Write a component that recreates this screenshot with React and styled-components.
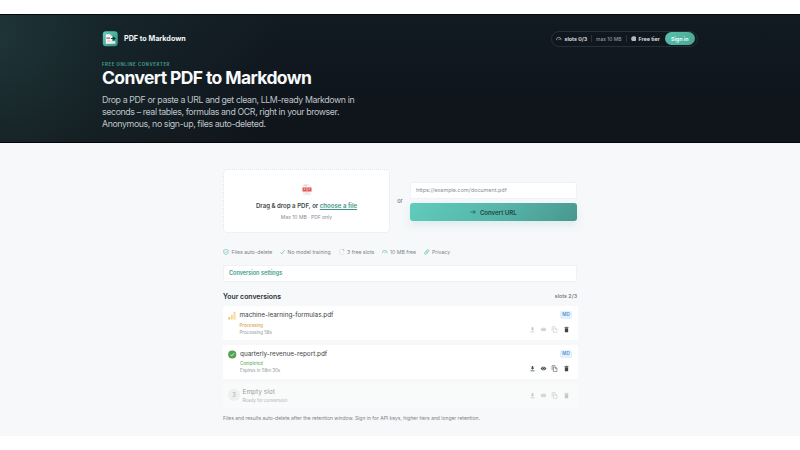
import React from 'react';
import styled, { createGlobalStyle } from 'styled-components';

const GlobalStyle = createGlobalStyle`
  * { box-sizing: border-box; }
  body { margin: 0; background: #fff; font-family: Inter, 'Liberation Sans', sans-serif; }
  h1, h2, p { margin: 0; }
  svg { display: block; flex: none; }
`;

const Page = styled.div`
  height: 450px;
  padding-top: 14px;
  overflow: hidden;
`;
const Hero = styled.header`
  height: 129px;
  padding: 15px 102px 0;
  border-top: 1px solid #04080b;
  border-bottom: 1px solid #04070a;
  background:
    radial-gradient(ellipse 280px 320px at 0 20%, rgba(47, 87, 83, 0.44), rgba(35, 67, 65, 0.26) 40%, transparent),
    linear-gradient(180deg, #121b22 0%, #10161d 55%, #10141b 100%);
`;
const NavBar = styled.nav`
  display: flex;
  align-items: center;
  justify-content: space-between;
  height: 17px;
`;
const Brand = styled.div`
  display: flex;
  align-items: center;
  gap: 6px;
  color: #f4f7f8;
  font-size: 7.2px;
  font-weight: 700;
  white-space: nowrap;
`;
const AccountPill = styled.div`
  display: flex;
  align-items: center;
  width: 147px;
  height: 16px;
  padding: 0 2px 0 4px;
  border: 1px solid #25303a;
  border-radius: 8px;
  background: #10171e;
  white-space: nowrap;
`;
const PillIcon = styled.span`
  width: 6px;
  color: #c8cdd0;
`;
const PillText = styled.span`
  width: ${p => p.$w}px;
  margin-left: ${p => p.$gap || 0}px;
  color: ${p => (p.$muted ? '#9299a0' : '#e3e7e9')};
  font-size: ${p => (p.$muted ? 4.95 : 5.35)}px;
  font-weight: ${p => (p.$muted ? 500 : 600)};
`;
const PillDivider = styled.i`
  width: 1px;
  height: 7px;
  margin: 0 4px 0 3.5px;
  background: #2a333b;
`;
const SignIn = styled.button`
  width: 30.5px;
  height: 13px;
  margin-left: auto;
  padding: 0;
  border: 0;
  border-radius: 7px;
  background: linear-gradient(135deg, #58c0ad, #4aa594);
  color: #e6fbf5;
  font: 700 5.3px Inter, sans-serif;
`;
const Eyebrow = styled.p`
  margin-top: 14.5px;
  color: #3f9a8c;
  font-size: 4.3px;
  font-weight: 700;
  line-height: 6px;
  letter-spacing: 0.6px;
`;
const Title = styled.h1`
  margin-top: -0.5px;
  color: #f8fafb;
  font-size: 17.5px;
  font-weight: 650;
  line-height: 22px;
  letter-spacing: -0.61px;
`;
const Lead = styled.p`
  margin-top: 5px;
  color: #bfc4c8;
  font-size: 8.8px;
  line-height: 12px;
  letter-spacing: -0.39px;
  white-space: nowrap;
`;

const Body = styled.main`
  height: 293px;
  padding: 26px 223px 0;
  background: #f6f8fa;
`;
const UploadGrid = styled.section`
  display: grid;
  grid-template-columns: 167px 20px 167px;
  align-items: center;
  height: 64px;
`;
const DropZone = styled.div`
  display: flex;
  flex-direction: column;
  align-items: center;
  height: 64px;
  padding-top: 13.5px;
  border: 1px dotted #dde3e6;
  border-radius: 5px;
  background: #fff;
  white-space: nowrap;
`;
const DropText = styled.p`
  margin-top: 6.5px;
  color: #43494d;
  font-size: 6.08px;
  font-weight: 600;
  line-height: 9px;
`;
const FileLink = styled.a`
  color: #3b9485;
  text-decoration: underline;
  text-decoration-thickness: 0.6px;
  text-underline-offset: 1px;
`;
const DropHint = styled.p`
  margin-top: 3.5px;
  color: #868c91;
  font-size: 5px;
  line-height: 7px;
`;
const Or = styled.span`
  color: #70767b;
  font-size: 5.6px;
  font-weight: 500;
  text-align: center;
`;
const UrlForm = styled.form`
  display: flex;
  flex-direction: column;
  gap: 4px;
  margin-top: 1px;
`;
const UrlInput = styled.input`
  width: 167px;
  height: 17px;
  padding: 0 5px;
  border: 1px solid #f0f3f5;
  border-radius: 2px;
  background: #fff;
  font: 400 5.45px Inter, sans-serif;
  &::placeholder { color: #888d92; opacity: 1; }
`;
const ConvertButton = styled.button`
  display: flex;
  align-items: center;
  justify-content: center;
  gap: 3.5px;
  height: 18.5px;
  border: 0;
  border-radius: 3px;
  background: linear-gradient(135deg, #60cdbc, #55b4a7 55%, #49978f);
  box-shadow: 0 4px 9px rgba(75, 177, 162, 0.15);
  color: #204745;
  font: 600 6.05px Inter, sans-serif;
`;
const Benefits = styled.ul`
  display: flex;
  height: 8px;
  margin: 14.5px 0 0;
  padding: 0;
  list-style: none;
`;
const Benefit = styled.li`
  display: flex;
  align-items: center;
  gap: 2.5px;
  width: ${p => p.$w}px;
  color: #7d8489;
  font-size: 5.17px;
  line-height: 8px;
  white-space: nowrap;
  svg { color: #5bbaa9; }
`;
const Settings = styled.button`
  display: block;
  width: 354px;
  height: 17px;
  margin-top: 9px;
  padding: 0 5px;
  border: 1px solid #eff2f4;
  border-radius: 2px;
  background: #fff;
  color: #409b8c;
  font: 600 5.53px Inter, sans-serif;
  text-align: left;
`;
const SectionHead = styled.div`
  display: flex;
  align-items: center;
  justify-content: space-between;
  height: 10px;
  margin-top: 9.5px;
`;
const SectionTitle = styled.h2`
  color: #2a2e31;
  font-size: 6.9px;
  font-weight: 600;
`;
const SlotCount = styled.span`
  color: #6b7074;
  font-size: 5.35px;
  font-weight: 500;
`;
const SlotList = styled.div`
  display: flex;
  flex-direction: column;
  gap: 4.5px;
  margin-top: 5px;
`;
const SlotRow = styled.article`
  display: flex;
  width: 355px;
  height: ${p => (p.$empty ? 25 : 34)}px;
  padding: ${p => (p.$empty ? '5px 10px 0 5px' : '5px 10px 0 5px')};
  border-radius: 2px;
  background: ${p => (p.$empty ? '#f9fafa' : '#fff')};
`;
const SlotInfo = styled.div`
  flex: 1;
  margin-left: ${p => (p.$empty ? 2.5 : 3.5)}px;
  white-space: nowrap;
`;
const FileName = styled.div`
  color: ${p => (p.$empty ? '#999da0' : '#3d4144')};
  font-size: ${p => (p.$empty ? 6.5 : 6.37)}px;
  font-weight: 400;
  line-height: 9px;
`;
const Status = styled.div`
  margin-top: 1.5px;
  color: ${p => p.$color};
  font-size: 4.4px;
  font-weight: 500;
  line-height: 7px;
`;
const Detail = styled.div`
  color: ${p => (p.$empty ? '#b1b5b7' : '#8f9497')};
  font-size: 4.47px;
  line-height: 7.5px;
`;
const SlotNumber = styled.span`
  display: grid;
  place-items: center;
  flex: none;
  width: 12px;
  height: 12px;
  margin-top: 1px;
  border-radius: 50%;
  background: #eeeff0;
  color: #a9adaf;
  font-size: 5.6px;
`;
const RowSide = styled.div`
  display: flex;
  flex-direction: column;
  align-items: flex-end;
  justify-content: ${p => (p.$empty ? 'flex-start' : 'space-between')};
  height: ${p => (p.$empty ? 12 : 22)}px;
  padding-top: ${p => (p.$empty ? 3.5 : 0)}px;
`;
const FormatBadge = styled.span`
  width: 12px;
  height: 8px;
  margin-right: -4px;
  border-radius: 2px;
  background: #e2f1fd;
  color: #5b93d0;
  font-size: 4.5px;
  font-weight: 600;
  line-height: 8px;
  text-align: center;
`;
const Actions = styled.div`
  display: flex;
  gap: 4.3px;
  margin-right: -1.5px;
`;
const ActionButton = styled.button`
  display: block;
  padding: 0;
  border: 0;
  background: none;
  color: ${p => (p.$off ? '#c3c6c8' : '#3f4346')};
`;
const Footnote = styled.p`
  margin-top: 6.5px;
  color: #7d8388;
  font-size: 4.98px;
  line-height: 7px;
  white-space: nowrap;
`;

const Logo = () => (
  <svg width="16" height="16" viewBox="0 0 30 30">
    <defs>
      <linearGradient id="logoFill" x2="1" y2="1">
        <stop stopColor="#5ed0bb" />
        <stop offset="1" stopColor="#388d80" />
      </linearGradient>
    </defs>
    <rect x="1.500" y="0.500" width="28" height="28" rx="6" fill="url(#logoFill)" />
    <path d="M7 6h8l4 4v14H7z" fill="#f6f3f1" />
    <path d="M15 6v4h4" fill="#bddbd5" />
    <path d="M8.500 12h6.500v3H8.500z" fill="#d66b69" />
    <path d="M10 19h6" stroke="#b9c5c3" strokeWidth="2" />
    <path d="M17 14h7M21 11l3.500 3-3.500 3" fill="none" stroke="#172c2c" strokeWidth="2" />
    <path d="M17 19h8v5h-8z" fill="#d5eee9" />
  </svg>
);
const PdfIcon = () => (
  <svg width="10" height="11" viewBox="0 0 20 22">
    <path d="M3.500 1h9.500l4 4v16h-13.500z" fill="#fbfbfb" stroke="#d8dddf" />
    <path d="M5 3.500h5" stroke="#8a9294" />
    <path d="M1 7h18v8H1z" fill="#df4f4b" />
    <path d="M4 13V9h2v2H4M9 9v4h2V9zM14 13V9h3M14 11h2" fill="none" stroke="#fff" strokeWidth=".7" />
    <path d="M6 18h8" stroke="#c9a3a2" />
  </svg>
);
const GaugeIcon = ({ size = 6 }) => (
  <svg width={size} height={size} viewBox="0 0 12 12" fill="none" stroke="currentColor" strokeWidth="1.4">
    <path d="M1 9V8a5 5 0 0 1 10 0v1M5.500 9l2.500-3" />
  </svg>
);
const GlobeIcon = () => (
  <svg width="5.500" height="5.500" viewBox="0 0 12 12" fill="#c3c8cb">
    <circle cx="6" cy="6" r="5.500" />
    <path d="M1 6h10M6 .5c-3 3-3 8 0 11M6 .5c3 3 3 8 0 11" fill="none" stroke="#7b858c" strokeWidth=".6" />
  </svg>
);
const ArrowIcon = () => (
  <svg width="6" height="6" viewBox="0 0 12 12" fill="none" stroke="currentColor" strokeWidth="1.300">
    <path d="M1 6h10M7 2.500L10.500 6 7 9.500" />
  </svg>
);
const ShieldIcon = () => (
  <svg width="6" height="6" viewBox="0 0 12 12" fill="none" stroke="currentColor" strokeWidth="1.200">
    <path d="M6 .8l4.500 1.500v4c0 2.500-1.800 4-4.500 5-2.700-1-4.500-2.500-4.500-5v-4zM3.700 6l1.700 1.700 3-3.400" />
  </svg>
);
const CheckIcon = () => (
  <svg width="5" height="6" viewBox="0 0 10 12" fill="none" stroke="currentColor" strokeWidth="1.500">
    <path d="M1 7l2.500 2.500L9 2.500" />
  </svg>
);
const SlotIcon = () => (
  <svg width="5.500" height="6" viewBox="0 0 11 12" fill="none" stroke="#8e989c">
    <path d="M1.500 11V1H7" stroke="#dce1e3" />
    <path d="M7 1h2.500v3" />
    <path d="M1.500 11h8V5" stroke="#e3e7e9" />
  </svg>
);
const LinkIcon = () => (
  <svg width="5.500" height="6" viewBox="0 0 12 12" fill="none" stroke="currentColor" strokeWidth="1.500">
    <path d="M5 3l1.500-1.500c2.700-2 5.500 1 3.700 3.300L8 7c-1.500 1.300-3.200.8-4-.7M7 9l-1.500 1.500c-2.700 2-5.500-1-3.700-3.300L4 5c1.500-1.300 3.200-.8 4 .7" />
  </svg>
);
const BarsIcon = () => (
  <svg width="8" height="9" viewBox="0 0 16 18">
    <path d="M1 12h3.500v5H1z" fill="#f2bd60" />
    <path d="M6 8h3.500v9H6z" fill="#f8d48d" />
    <path d="M11.500 2h3v14.500h-3z" fill="#fdebc4" stroke="#f3c977" />
  </svg>
);
const DoneIcon = () => (
  <svg width="8.500" height="9" viewBox="0 0 17 18">
    <circle cx="8.500" cy="9" r="8.200" fill="#53a152" />
    <path d="M4.700 9.200l2.700 2.700 5-5.500" fill="none" stroke="#fff" strokeWidth="1.500" />
  </svg>
);

const ACTION_DRAWINGS = [
  { name: 'Download', art: <path d="M6.500 2h3v4.500h2.500l-4 4.500-4-4.500h2.500zM3.500 12.500h9V14h-9z" fill="currentColor" /> },
  {
    name: 'Preview',
    art: (
      <g>
        <path d="M1.500 8C4 2.500 12 2.500 14.500 8 12 13.500 4 13.500 1.500 8z" fill="currentColor" />
        <circle cx="8" cy="8" r="2.400" fill="currentColor" stroke="#fff" strokeWidth="1.200" />
      </g>
    ),
  },
  { name: 'Copy', art: <path d="M2.500 11.500v-10h8M5.500 4.500h5l3 3v7.500h-8zM10 5v3h3" fill="none" stroke="currentColor" strokeWidth="1.200" /> },
  { name: 'Delete', art: <path d="M3.500 2.500h3l1-1h2l1 1h2V4h-9zM4.200 5h7.600v9.500H4.200z" fill="currentColor" /> },
];

const SlotActions = ({ enabled = [] }) => (
  <Actions>
    {ACTION_DRAWINGS.map(({ name, art }) => (
      <ActionButton key={name} $off={!enabled.includes(name)} aria-label={name}>
        <svg width="7" height="7" viewBox="0 0 16 16">{art}</svg>
      </ActionButton>
    ))}
  </Actions>
);

const benefits = [
  { label: 'Files auto-delete', icon: <ShieldIcon />, width: 57 },
  { label: 'No model training', icon: <CheckIcon />, width: 59 },
  { label: '3 free slots', icon: <SlotIcon />, width: 43 },
  { label: '10 MB free', icon: <GaugeIcon size={5.5} />, width: 42 },
  { label: 'Privacy', icon: <LinkIcon />, width: 40 },
];

const files = [
  { name: 'machine-learning-formulas.pdf', status: 'Processing', color: '#dda054', detail: 'Processing 58s', icon: <BarsIcon />, enabled: ['Delete'] },
  { name: 'quarterly-revenue-report.pdf', status: 'Completed', color: '#6cb76c', detail: 'Expires in 58m 30s', icon: <DoneIcon />, enabled: ['Download', 'Preview', 'Copy', 'Delete'] },
];

export default function App() {
  return (
    <Page>
      <GlobalStyle />
      <Hero>
        <NavBar>
          <Brand><Logo />PDF to Markdown</Brand>
          <AccountPill>
            <PillIcon><GaugeIcon size={5.5} /></PillIcon>
            <PillText $w={23} $gap={2.5}>slots 0/3</PillText>
            <PillDivider />
            <PillText $muted $w={26}>max 10 MB</PillText>
            <PillDivider />
            <GlobeIcon />
            <PillText $w={22} $gap={2.5}>Free tier</PillText>
            <SignIn>Sign in</SignIn>
          </AccountPill>
        </NavBar>
        <Eyebrow>FREE ONLINE CONVERTER</Eyebrow>
        <Title>Convert PDF to Markdown</Title>
        <Lead>
          Drop a PDF or paste a URL and get clean, LLM-ready Markdown in<br />
          seconds – real tables, formulas and OCR, right in your browser.<br />
          Anonymous, no sign-up, files auto-deleted.
        </Lead>
      </Hero>
      <Body>
        <UploadGrid>
          <DropZone>
            <PdfIcon />
            <DropText>Drag &amp; drop a PDF, or <FileLink>choose a file</FileLink></DropText>
            <DropHint>Max 10 MB · PDF only</DropHint>
          </DropZone>
          <Or>or</Or>
          <UrlForm>
            <UrlInput placeholder="https://example.com/document.pdf" />
            <ConvertButton type="button"><ArrowIcon />Convert URL</ConvertButton>
          </UrlForm>
        </UploadGrid>
        <Benefits>
          {benefits.map(b => <Benefit key={b.label} $w={b.width}>{b.icon}{b.label}</Benefit>)}
        </Benefits>
        <Settings>Conversion settings</Settings>
        <SectionHead>
          <SectionTitle>Your conversions</SectionTitle>
          <SlotCount>slots 2/3</SlotCount>
        </SectionHead>
        <SlotList>
          {files.map(f => (
            <SlotRow key={f.name}>
              {f.icon}
              <SlotInfo>
                <FileName>{f.name}</FileName>
                <Status $color={f.color}>{f.status}</Status>
                <Detail>{f.detail}</Detail>
              </SlotInfo>
              <RowSide>
                <FormatBadge>MD</FormatBadge>
                <SlotActions enabled={f.enabled} />
              </RowSide>
            </SlotRow>
          ))}
          <SlotRow $empty>
            <SlotNumber>3</SlotNumber>
            <SlotInfo $empty>
              <FileName $empty>Empty slot</FileName>
              <Detail $empty>Ready for conversion</Detail>
            </SlotInfo>
            <RowSide $empty><SlotActions /></RowSide>
          </SlotRow>
        </SlotList>
        <Footnote>Files and results auto-delete after the retention window. Sign in for API keys, higher tiers and longer retention.</Footnote>
      </Body>
    </Page>
  );
}
